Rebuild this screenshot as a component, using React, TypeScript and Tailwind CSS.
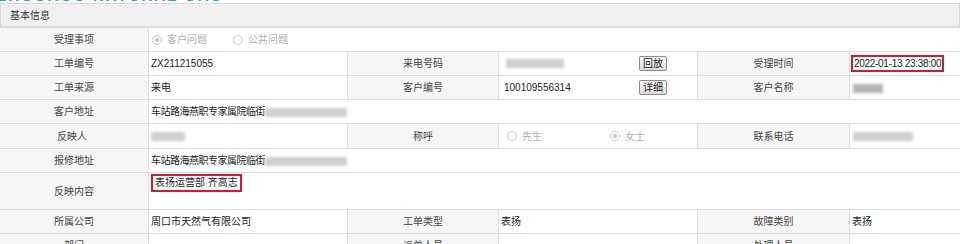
import React from "react";

const font = { fontFamily: '"Liberation Sans", "Noto Sans CJK SC", sans-serif' };

function Blur({ w, dark }: { w: number; dark?: boolean }) {
  return (
    <span
      className={
        "inline-block h-[9px] align-middle blur-[1.5px] " +
        (dark ? "bg-[#b4b4b4]" : "bg-[#cfcfcf]")
      }
      style={{ width: w }}
    />
  );
}

function Radio({ checked, label }: { checked?: boolean; label: string }) {
  return (
    <span className="inline-flex items-center gap-[5px] text-[#b0b0b0]">
      <span className="w-[10px] h-[10px] rounded-full border border-[#cfcfcf] bg-[#fafafa] flex items-center justify-center">
        {checked && <span className="w-[4px] h-[4px] rounded-full bg-[#c4c4c4]" />}
      </span>
      {label}
    </span>
  );
}

function Btn({ children }: { children: React.ReactNode }) {
  return (
    <span className="inline-flex items-center h-[15px] px-[3px] border border-[#8a8a8a] rounded-[2px] bg-gradient-to-b from-[#fafafa] to-[#dcdcdc] text-[10px] leading-none text-[#222]">
      {children}
    </span>
  );
}

const L = "border border-[#dedede] bg-[#f6f6f6] text-center text-[#444] font-normal";
const V = "border border-[#dedede] bg-white px-[2px] text-left text-[#222] whitespace-nowrap";

export default function App() {
  return (
    <div className="w-[960px] h-[244px] overflow-hidden bg-white text-[10px]" style={font}>
      <div className="h-[3px] overflow-hidden flex items-end">
        <span className="text-[15px] font-bold leading-none tracking-[2px] text-[#2ea3b6] -ml-[3px] whitespace-nowrap">
          ZHOUKOU NATURAL GAS
        </span>
      </div>
      <div className="h-[24px] border border-[#d8d8d8] bg-[#f0f0f0] flex items-center pl-[9px] text-[#333]">
        基本信息
      </div>
      <table className="w-[962px] -ml-px border-collapse table-fixed">
        <colgroup>
          <col className="w-[149px]" />
          <col className="w-[199px]" />
          <col className="w-[151px]" />
          <col className="w-[199px]" />
          <col className="w-[152px]" />
          <col className="w-[112px]" />
        </colgroup>
        <tbody>
          <tr className="h-[24px]">
            <td className={L}>受理事项</td>
            <td className={V} colSpan={5}>
              <div className="flex items-center gap-[26px] pl-[1px]">
                <Radio checked label="客户问题" />
                <Radio label="公共问题" />
              </div>
            </td>
          </tr>
          <tr className="h-[24px]">
            <td className={L}>工单编号</td>
            <td className={V}>ZX211215055</td>
            <td className={L}>来电号码</td>
            <td className={V}>
              <div className="flex items-center justify-between pl-[5px] pr-[28px]">
                <Blur w={58} />
                <Btn>回放</Btn>
              </div>
            </td>
            <td className={L}>受理时间</td>
            <td className={V + " pl-[1px]"}>
              <span className="inline-block border-2 border-[#e8102a] px-[1px] leading-[13px] tracking-[-0.3px]">
                2022-01-13 23:38:00
              </span>
            </td>
          </tr>
          <tr className="h-[24px]">
            <td className={L}>工单来源</td>
            <td className={V}>来电</td>
            <td className={L}>客户编号</td>
            <td className={V}>
              <div className="flex items-center justify-between pl-[3px] pr-[28px]">
                <span>100109556314</span>
                <Btn>详细</Btn>
              </div>
            </td>
            <td className={L}>客户名称</td>
            <td className={V}>
              <span className="pl-[1px]"><Blur w={30} dark /></span>
            </td>
          </tr>
          <tr className="h-[24px]">
            <td className={L}>客户地址</td>
            <td className={V + " tracking-[-0.5px]"} colSpan={5}>
              车站路海燕职专家属院临街<Blur w={82} />
            </td>
          </tr>
          <tr className="h-[25px]">
            <td className={L}>
              <span className="pr-[4px]">反映人</span>
            </td>
            <td className={V}>
              <Blur w={34} />
            </td>
            <td className={L}>称呼</td>
            <td className={V}>
              <div className="flex items-center gap-[68px] pl-[6px]">
                <Radio label="先生" />
                <Radio checked label="女士" />
              </div>
            </td>
            <td className={L}>联系电话</td>
            <td className={V}>
              <span className="pl-[1px]"><Blur w={60} /></span>
            </td>
          </tr>
          <tr className="h-[24px]">
            <td className={L}>报修地址</td>
            <td className={V + " tracking-[-0.5px]"} colSpan={5}>
              车站路海燕职专家属院临街<Blur w={82} />
            </td>
          </tr>
          <tr className="h-[37px]">
            <td className={L}>反映内容</td>
            <td className={V + " align-top pt-[1px]"} colSpan={5}>
              <span className="inline-block border-2 border-[#e8102a] px-[2px] leading-[14px]">
                表扬运营部 齐高志
              </span>
            </td>
          </tr>
          <tr className="h-[24px]">
            <td className={L}>所属公司</td>
            <td className={V}>周口市天然气有限公司</td>
            <td className={L}>工单类型</td>
            <td className={V}>表扬</td>
            <td className={L}>故障类别</td>
            <td className={V}>表扬</td>
          </tr>
          <tr className="h-[24px]">
            <td className={L}>部门</td>
            <td className={V}></td>
            <td className={L}>派单人员</td>
            <td className={V}></td>
            <td className={L}>处理人员</td>
            <td className={V}></td>
          </tr>
        </tbody>
      </table>
    </div>
  );
}
